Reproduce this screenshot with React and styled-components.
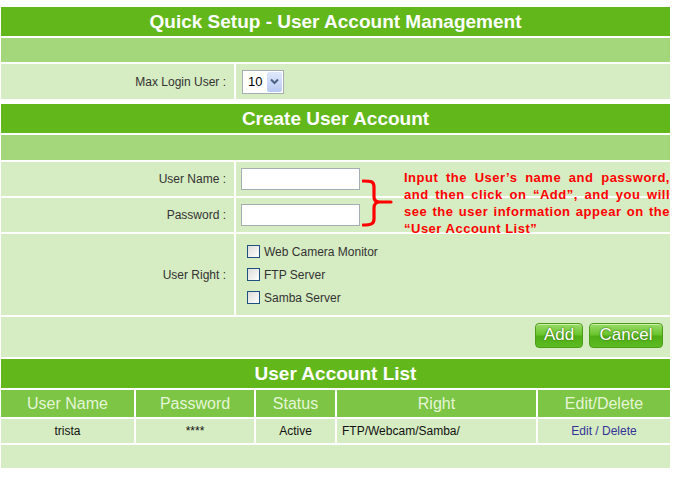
import React from "react";
import styled, { createGlobalStyle } from "styled-components";

const GlobalStyle = createGlobalStyle`
  html, body {
    margin: 0;
    padding: 0;
    background: #ffffff;
  }
  body {
    font-family: "Liberation Sans", Arial, sans-serif;
    font-size: 12px;
    color: #333333;
  }
`;

const Page = styled.div`
  width: 669px;
  padding: 7px 0 0 1px;
  display: flex;
  flex-direction: column;
`;

const Section = styled.div`
  display: grid;
  grid-template-columns: ${(p) => p.cols || "1fr"};
  gap: 2px;
  margin-top: ${(p) => p.top || 0}px;
  position: relative;
`;

const Header = styled.div`
  grid-column: 1 / -1;
  height: 29px;
  background: #62b81a;
  color: #ffffff;
  font-weight: bold;
  font-size: 19px;
  display: flex;
  align-items: center;
  justify-content: center;
`;

const Blank = styled.div`
  grid-column: 1 / -1;
  height: ${(p) => p.h || 24}px;
  background: ${(p) => (p.light ? "#d6ecc2" : "#a4d77c")};
`;

const Label = styled.div`
  height: ${(p) => p.h}px;
  background: #d6ecc2;
  display: flex;
  align-items: center;
  justify-content: flex-end;
  padding-right: 8px;
  color: #333333;
`;

const Value = styled.div`
  height: ${(p) => p.h}px;
  background: #d6ecc2;
  display: flex;
  flex-direction: ${(p) => (p.column ? "column" : "row")};
  align-items: ${(p) => (p.column ? "flex-start" : "center")};
  justify-content: ${(p) => (p.column ? "center" : "flex-start")};
  padding-left: ${(p) => p.pl || 5}px;
  gap: ${(p) => (p.column ? "9px" : "0")};
`;

const Select = styled.div`
  width: 42px;
  height: 24px;
  box-sizing: border-box;
  border: 1px solid #a5acb2;
  background: #ffffff;
  display: flex;
  align-items: center;
  justify-content: space-between;
  padding: 1px 1px 1px 5px;
  font-size: 13px;
  color: #000000;
`;

const SelectArrow = styled.div`
  width: 15px;
  height: 20px;
  border-radius: 2px;
  background: linear-gradient(#dfe8fb, #b8c9f2);
  display: flex;
  align-items: center;
  justify-content: center;
`;

const TextInput = styled.div`
  width: 119px;
  height: 22px;
  box-sizing: border-box;
  border: 1px solid #a5acb2;
  background: #ffffff;
`;

const CheckRow = styled.label`
  display: flex;
  align-items: center;
  gap: 4px;
  color: #333333;
  font-size: 12px;
  line-height: 14px;
`;

const Box = styled.span`
  width: 11px;
  height: 11px;
  border: 1px solid #1c5180;
  background: linear-gradient(135deg, #dcdcd7, #ffffff);
  display: inline-block;
`;

const ButtonRow = styled.div`
  grid-column: 1 / -1;
  height: 40px;
  background: #d6ecc2;
  display: flex;
  align-items: center;
  justify-content: flex-end;
  gap: 6px;
  padding-right: 7px;
`;

const GlossButton = styled.div`
  width: ${(p) => p.w}px;
  height: 25px;
  margin-bottom: 4px;
  box-sizing: border-box;
  border-radius: 4px;
  border: 1px solid #4c9c1a;
  background: linear-gradient(#9bdb6a 0%, #6bc52e 45%, #4fae16 55%, #5dbc22 100%);
  box-shadow: inset 0 1px 0 #c8f0a8;
  color: #ffffff;
  font-size: 17px;
  text-shadow: 0 0 2px #3d7a12, 0 0 1px #3d7a12;
  display: flex;
  align-items: center;
  justify-content: center;
`;

const ColHead = styled.div`
  height: 27px;
  background: #7cc545;
  color: #e6f5d8;
  font-size: 16px;
  display: flex;
  align-items: center;
  justify-content: center;
`;

const Cell = styled.div`
  height: 24px;
  background: #d6ecc2;
  color: #111111;
  font-size: 12px;
  display: flex;
  align-items: center;
  justify-content: ${(p) => (p.left ? "flex-start" : "center")};
  padding-left: ${(p) => (p.left ? 5 : 0)}px;
`;

const LinkText = styled.span`
  color: #333399;
`;

const Note = styled.div`
  position: absolute;
  left: 361px;
  top: 74px;
  display: flex;
  align-items: flex-start;
  gap: 10px;
`;

const NoteText = styled.div`
  width: 266px;
  margin-top: -9px;
  color: #ff0000;
  font-weight: bold;
  font-size: 13px;
  line-height: 17px;
  letter-spacing: 0.5px;
`;

const NoteLine = styled.div`
  text-align: ${(p) => (p.last ? "left" : "justify")};
  text-align-last: ${(p) => (p.last ? "left" : "justify")};
  white-space: nowrap;
`;

function Brace() {
  return (
    <svg width="32" height="50" viewBox="0 0 32 50">
      <path
        d="M1 3 C 9 3 12 3 12 9 L 12 19 C 12 22 14 24 18 24 L 29 24 M 18 24 C 14 24 12 26 12 30 L 12 41 C 12 46 9 47 1 47"
        fill="none"
        stroke="#ff0000"
        strokeWidth="3.2"
        strokeLinecap="round"
      />
    </svg>
  );
}

export default function App() {
  return (
    <>
      <GlobalStyle />
      <Page>
        <Section cols="233px 1fr">
          <Header>Quick Setup - User Account Management</Header>
          <Blank />
          <Label h={35}>Max Login User :</Label>
          <Value h={35} pl={6}>
            <Select>
              10
              <SelectArrow>
                <svg width="9" height="7" viewBox="0 0 9 7">
                  <path d="M1 1.5 L4.5 5 L8 1.5" fill="none" stroke="#4d6185" strokeWidth="2" />
                </svg>
              </SelectArrow>
            </Select>
          </Value>
        </Section>

        <Section cols="233px 1fr" top={5}>
          <Header>Create User Account</Header>
          <Blank h={25} />
          <Label h={34}>User Name :</Label>
          <Value h={34}>
            <TextInput />
          </Value>
          <Label h={34}>Password :</Label>
          <Value h={34}>
            <TextInput />
          </Value>
          <Label h={81}>User Right :</Label>
          <Value h={81} column pl={11}>
            <CheckRow>
              <Box />
              Web Camera Monitor
            </CheckRow>
            <CheckRow>
              <Box />
              FTP Server
            </CheckRow>
            <CheckRow>
              <Box />
              Samba Server
            </CheckRow>
          </Value>
          <ButtonRow>
            <GlossButton w={48}>Add</GlossButton>
            <GlossButton w={74}>Cancel</GlossButton>
          </ButtonRow>
          <Note>
            <Brace />
            <NoteText>
              <NoteLine>Input the User’s name and password,</NoteLine>
              <NoteLine>and then click on “Add”, and you will</NoteLine>
              <NoteLine>see the user information appear on the</NoteLine>
              <NoteLine last>“User Account List”</NoteLine>
            </NoteText>
          </Note>
        </Section>

        <Section cols="133px 118px 79px 199px 1fr" top={2}>
          <Header>User Account List</Header>
          <ColHead>User Name</ColHead>
          <ColHead>Password</ColHead>
          <ColHead>Status</ColHead>
          <ColHead>Right</ColHead>
          <ColHead>Edit/Delete</ColHead>
          <Cell>trista</Cell>
          <Cell>****</Cell>
          <Cell>Active</Cell>
          <Cell left>FTP/Webcam/Samba/</Cell>
          <Cell>
            <LinkText>Edit / Delete</LinkText>
          </Cell>
          <Blank h={23} light />
        </Section>
      </Page>
    </>
  );
}
